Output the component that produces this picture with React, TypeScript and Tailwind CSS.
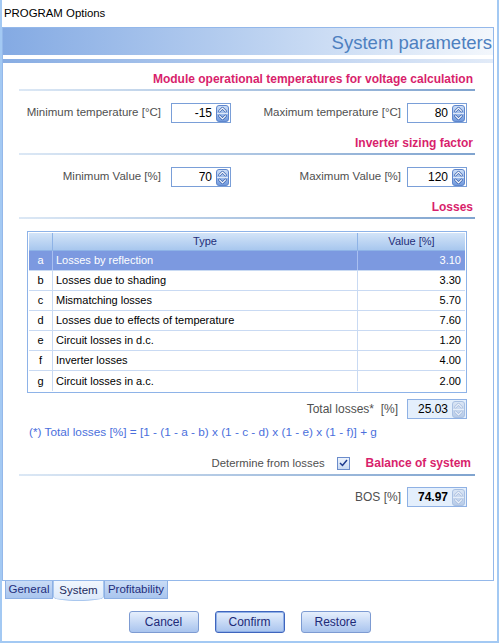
import React from "react";

function Spinner({ disabled = false, id }: { disabled?: boolean; id: string }) {
  const top = disabled ? "#dbe6f5" : "#cfe0f8";
  const bot = disabled ? "#b7cbe8" : "#6f98dc";
  const stroke = disabled ? "#a9c0e2" : "#5f86cc";
  const chev = disabled ? "#eef3fa" : "#ffffff";
  const chevOut = disabled ? "#a7bddf" : "#3a63b0";
  return (
    <svg width="13" height="17" viewBox="0 0 13 17" className="block shrink-0">
      <defs>
        <linearGradient id={id} x1="0" y1="0" x2="0" y2="1">
          <stop offset="0" stopColor={top} />
          <stop offset="1" stopColor={bot} />
        </linearGradient>
      </defs>
      <rect x="0.5" y="0.5" width="12" height="16" rx="2.5" fill={`url(#${id})`} stroke={stroke} />
      <line x1="1" y1="8.5" x2="12" y2="8.5" stroke={disabled ? "#e6eef9" : "#dfe9f8"} />
      <path d="M3.5 6.2 L6.5 3.2 L9.5 6.2" stroke={chevOut} strokeWidth="2.6" fill="none" strokeLinecap="round" strokeLinejoin="round" />
      <path d="M3.5 6.2 L6.5 3.2 L9.5 6.2" stroke={chev} strokeWidth="1.2" fill="none" strokeLinecap="round" strokeLinejoin="round" />
      <path d="M3.5 10.8 L6.5 13.8 L9.5 10.8" stroke={chevOut} strokeWidth="2.6" fill="none" strokeLinecap="round" strokeLinejoin="round" />
      <path d="M3.5 10.8 L6.5 13.8 L9.5 10.8" stroke={chev} strokeWidth="1.2" fill="none" strokeLinecap="round" strokeLinejoin="round" />
    </svg>
  );
}

function NumBox({ value, id, disabled = false, bold = false }: { value: string; id: string; disabled?: boolean; bold?: boolean }) {
  return (
    <div
      className={`w-[60px] h-[20px] border flex items-center justify-end pr-[1px] ${
        disabled ? "border-[#8fb1e4] bg-[#e4effc]" : "border-[#7a9fd8] bg-white"
      }`}
    >
      <span className={`text-[12px] leading-[14px] text-black mr-[4px] ${bold ? "font-bold" : ""}`}>{value}</span>
      <Spinner disabled={disabled} id={id} />
    </div>
  );
}

function SectionTitle({ children }: { children: React.ReactNode }) {
  return (
    <div className="ml-[16px] mr-[18px]">
      <div className="flex justify-end items-center h-[16px] pr-[2px]">
        <span className="font-bold text-[12px] text-[#d81f6c]">{children}</span>
      </div>
      <div className="mt-[2px] h-[2px] bg-gradient-to-r from-[#dce8f5] to-[#80a4cf]" />
    </div>
  );
}

const Label = ({ children }: { children: React.ReactNode }) => (
  <span className="text-[11.5px] text-[#505050] whitespace-nowrap">{children}</span>
);

const rows: [string, string, string][] = [
  ["a", "Losses by reflection", "3.10"],
  ["b", "Losses due to shading", "3.30"],
  ["c", "Mismatching losses", "5.70"],
  ["d", "Losses due to effects of temperature", "7.60"],
  ["e", "Circuit losses in d.c.", "1.20"],
  ["f", "Inverter losses", "4.00"],
  ["g", "Circuit losses in a.c.", "2.00"],
];

export default function App() {
  return (
    <div className="w-[499px] h-[643px] bg-white border-x-2 border-b-2 border-[#a3c9f3] flex flex-col font-['Liberation_Sans',Arial,sans-serif] overflow-hidden">
      {/* title bar */}
      <div className="h-[27px] shrink-0 flex items-center pl-[2px] text-[11.4px] text-black">PROGRAM Options</div>

      {/* panel */}
      <div className="h-[554px] shrink-0 mr-[3px] border border-[#94b8ea] flex flex-col">
        <div className="h-[27px] shrink-0 bg-gradient-to-r from-[#84aae3] via-[#b9d0f0] to-[#f3f7fc] flex items-center justify-end pr-[1px]">
          <span className="text-[18.5px] leading-[20px] text-[#4d80c0] mt-[3px]">System parameters</span>
        </div>
        <div className="h-[4px] mt-[4px] shrink-0 bg-gradient-to-r from-[#88ade3] to-[#e2ebf8]" />

        <div className="mt-[8px]">
          <SectionTitle>Module operational temperatures for voltage calculation</SectionTitle>
        </div>

        <div className="mt-[12px] flex items-center h-[20px]">
          <div className="w-[228px] flex justify-end items-center gap-[10px]">
            <Label>Minimum temperature [°C]</Label>
            <NumBox value="-15" id="s1" />
          </div>
          <div className="flex-1 flex justify-end items-center gap-[6px] pr-[26px]">
            <Label>Maximum temperature [°C]</Label>
            <NumBox value="80" id="s2" />
          </div>
        </div>

        <div className="mt-[12px]">
          <SectionTitle>Inverter sizing factor</SectionTitle>
        </div>

        <div className="mt-[12px] flex items-center h-[20px]">
          <div className="w-[228px] flex justify-end items-center gap-[10px]">
            <Label>Minimum Value [%]</Label>
            <NumBox value="70" id="s3" />
          </div>
          <div className="flex-1 flex justify-end items-center gap-[6px] pr-[26px]">
            <Label>Maximum Value [%]</Label>
            <NumBox value="120" id="s4" />
          </div>
        </div>

        <div className="mt-[12px]">
          <SectionTitle>Losses</SectionTitle>
        </div>

        {/* table */}
        <div className="mt-[12px] ml-[24px] w-[440px] border border-[#8eb3e8] p-[1px] bg-white text-[11px]">
          <div className="flex h-[18px] bg-gradient-to-b from-[#d3e4f8] to-[#a8c7ee] text-[#1f2d78] border-b border-[#8eb3e6]">
            <div className="w-[24px] border-r border-[#8eb3e6]" />
            <div className="w-[305px] border-r border-[#8eb3e6] flex items-center justify-center">Type</div>
            <div className="flex-1 flex items-center justify-center">Value [%]</div>
          </div>
          {rows.map(([k, t, v], i) => {
            const sel = i === 0;
            return (
              <div
                key={k}
                className={`flex h-[20px] ${i < rows.length - 1 ? "border-b" : ""} border-[#c9daf3] ${
                  sel ? "bg-[#7c99e0] text-white" : "text-black"
                }`}
              >
                <div className={`w-[24px] border-r ${sel ? "border-[#a9bff0]" : "border-[#c9daf3]"} flex items-center justify-center`}>{k}</div>
                <div className={`w-[305px] border-r ${sel ? "border-[#a9bff0]" : "border-[#c9daf3]"} flex items-center pl-[3px]`}>{t}</div>
                <div className="flex-1 flex items-center justify-end pr-[4px]">{v}</div>
              </div>
            );
          })}
        </div>

        <div className="mt-[6px] flex justify-end items-center gap-[9px] pr-[26px] h-[20px]">
          <span className="text-[12px] text-[#505050]">Total losses*&nbsp; [%]</span>
          <NumBox value="25.03" id="s5" disabled />
        </div>

        <div className="mt-[7px] ml-[26px] h-[14px] flex items-center text-[11.8px] text-[#4b6fdc] whitespace-nowrap">
          (*) Total losses [%] = [1 - (1 - a - b) x (1 - c - d) x (1 - e) x (1 - f)] + g
        </div>

        <div className="mt-[15px] ml-[16px] mr-[18px]">
          <div className="flex justify-end items-center h-[16px] pr-[4px]">
            <span className="text-[11.3px] text-[#505050]">Determine from losses</span>
            <div className="ml-[12px] w-[13px] h-[13px] border border-[#6b8ccb] bg-gradient-to-b from-[#eef4fc] to-[#c9daf3] flex items-center justify-center">
              <svg width="9" height="8" viewBox="0 0 9 8">
                <path d="M1 4 L3.5 6.5 L8 1" stroke="#1c3a8e" strokeWidth="1.5" fill="none" />
              </svg>
            </div>
            <span className="ml-[16px] font-bold text-[12px] text-[#d81f6c]">Balance of system</span>
          </div>
          <div className="mt-[3px] h-[2px] bg-gradient-to-r from-[#dce8f5] to-[#80a4cf]" />
        </div>

        <div className="mt-[11px] flex justify-end items-center gap-[6px] pr-[26px] h-[20px]">
          <span className="text-[12px] text-[#505050]">BOS [%]</span>
          <NumBox value="74.97" id="s6" disabled bold />
        </div>
      </div>

      {/* tabs */}
      <div className="flex ml-[3px] items-start h-[20px] shrink-0 text-[11.5px] text-[#1f2d7c]">
        <div className="w-[48px] h-[18px] border border-t-0 border-[#8db0e4] bg-gradient-to-b from-[#c9dcf6] to-[#a9c5ee] flex items-center justify-center">
          General
        </div>
        <div className="w-[51px] h-[20px] border-b border-x border-[#a9c7ee] rounded-b-[50%_4px] bg-gradient-to-b from-[#f1f7fe] to-[#dce9fa] flex items-center justify-center text-[#222a5c]">
          System
        </div>
        <div className="w-[64px] h-[18px] border border-t-0 border-[#8db0e4] bg-gradient-to-b from-[#c9dcf6] to-[#a9c5ee] flex items-center justify-center">
          Profitability
        </div>
      </div>

      {/* buttons */}
      <div className="mt-[10px] flex justify-center gap-[16px] text-[12px] text-[#1d2a78]">
        <button className="w-[70px] h-[22px] rounded-[3px] border border-[#7d9bd2] bg-gradient-to-b from-[#e6effc] to-[#a9c4ee]">Cancel</button>
        <button className="w-[70px] h-[22px] rounded-[3px] border border-[#3f65bd] shadow-[inset_0_0_0_1px_#8fb0e8] bg-gradient-to-b from-[#e6effc] to-[#a9c4ee]">Confirm</button>
        <button className="w-[70px] h-[22px] rounded-[3px] border border-[#7d9bd2] bg-gradient-to-b from-[#e6effc] to-[#a9c4ee]">Restore</button>
      </div>
    </div>
  );
}
